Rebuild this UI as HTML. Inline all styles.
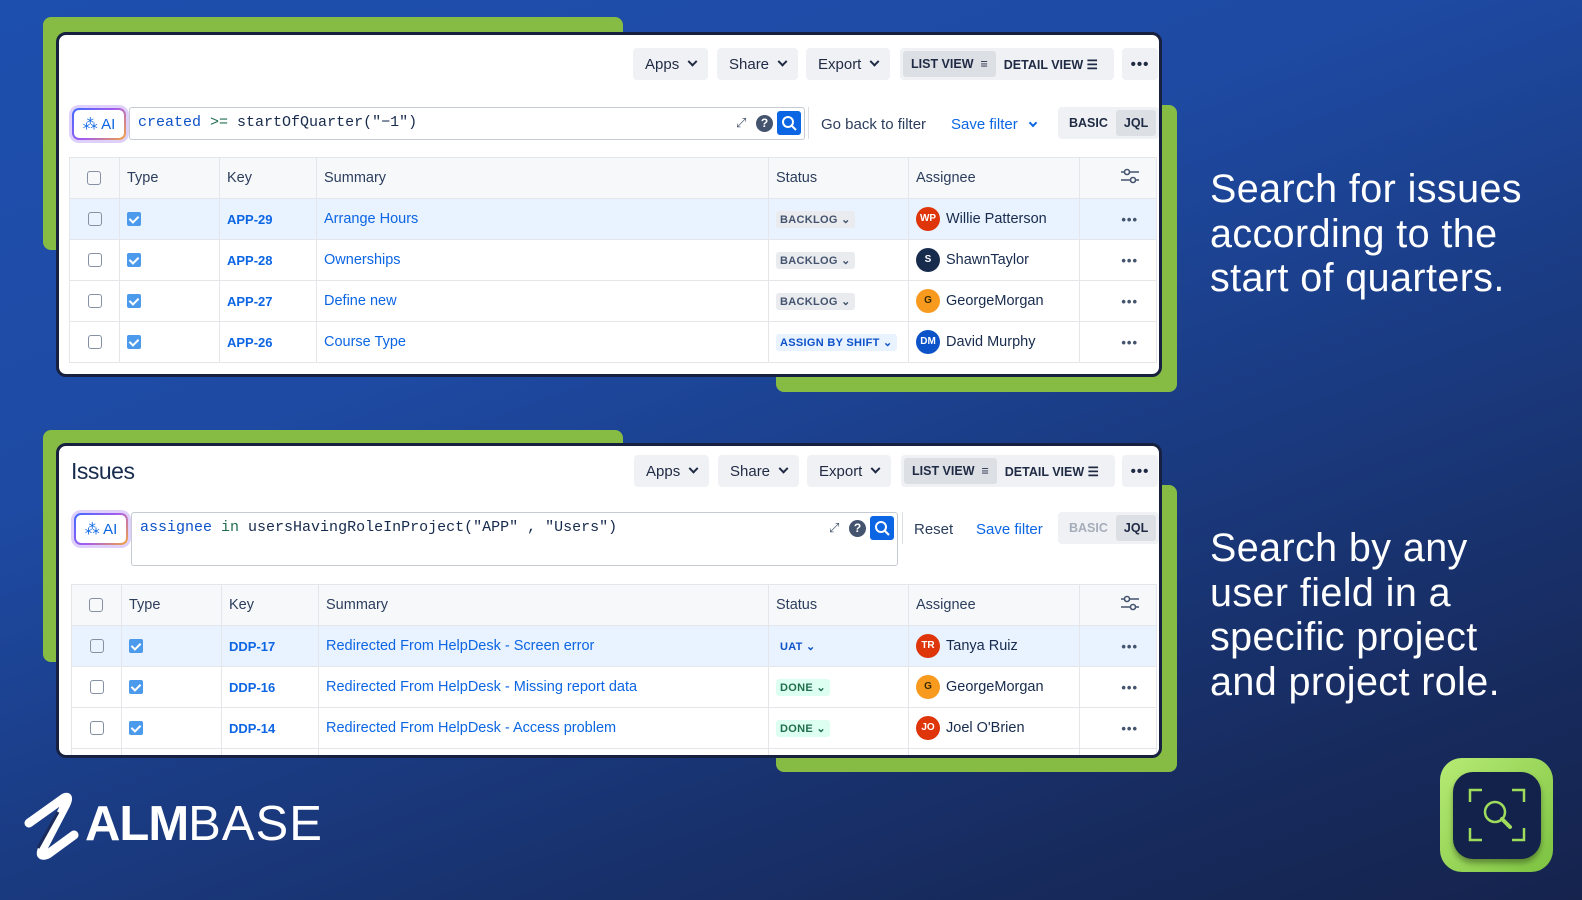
<!DOCTYPE html>
<html><head><meta charset="utf-8"><style>
*{box-sizing:border-box;margin:0;padding:0}
body{width:1582px;height:900px;overflow:hidden;position:relative;font-family:"Liberation Sans",Arial,sans-serif;
background:linear-gradient(160deg,#1d4fae 0%,#1e4aa3 35%,#1a3a80 60%,#172a5c 85%,#15234d 100%);}
i{font-style:normal}
.a{position:absolute}
.green{position:absolute;background:#86bc44;border-radius:8px}
.card{position:absolute;background:#fff;border:3px solid #17213f;border-radius:10px;overflow:hidden}
.btn{position:absolute;background:#f0f1f4;border-radius:4px;height:32px;font-size:15px;color:#1f2a44;display:flex;align-items:center;padding:0 12px;gap:10px}
.chev{width:7px;height:7px;border-right:2px solid #1f2a44;border-bottom:2px solid #1f2a44;transform:rotate(45deg) translate(-2px,-2px)}
.seg{position:absolute;background:#f0f1f4;border-radius:4px;height:32px;display:flex;align-items:center;padding:3px;font-size:12.5px;font-weight:bold;color:#1f2a44}
.seg span{padding:0 8px;height:26px;display:flex;align-items:center;border-radius:3px}
.seg .on{background:#dcdfe4}
.ai{position:absolute;width:54px;height:32px;border-radius:7px;border:2px solid transparent;background:linear-gradient(#fff,#fff) padding-box,linear-gradient(135deg,#3b6cff,#a45cf0 50%,#f5a53a) border-box;box-shadow:0 0 0 3px rgba(160,120,240,.35);color:#0c66e4;font-size:15px;display:flex;align-items:center;justify-content:center}
.inp{position:absolute;border:1px solid #c5cad3;border-radius:3px;background:#fff;font-family:"Liberation Mono",monospace;font-size:15px;color:#172b4d;padding:6px 8px}
.kw{color:#0c52c8}.op{color:#216e4e}
.sbtn{position:absolute;width:24px;height:24px;background:#0c66e4;border-radius:3px}
.help{position:absolute;width:17px;height:17px;border-radius:50%;background:#44546f;color:#fff;font-size:12px;font-weight:bold;text-align:center;line-height:17px}
table{position:absolute;border-collapse:collapse;font-size:14.5px;color:#172b4d}
td,th{border:1px solid #e4e6ea;height:41px;padding:0 7px;text-align:left;font-weight:normal;white-space:nowrap;vertical-align:middle}
th{background:#f7f8f9;color:#2c3e5d}
tr.hl td{background:#e9f2ff}
.cb{display:inline-block;width:14px;height:14px;border:1.5px solid #8590a2;border-radius:3px;vertical-align:middle;margin-left:11px}
.ck{display:inline-block;width:14px;height:14px;background:#4c9aeb;border-radius:2px;vertical-align:middle;position:relative}
.ck:after{content:"";position:absolute;left:4px;top:1.5px;width:4px;height:7px;border-right:2px solid #fff;border-bottom:2px solid #fff;transform:rotate(45deg)}
.key{color:#0c66e4;font-weight:bold;font-size:13px}
.sum{color:#0c66e4}
.lz{display:inline-block;font-size:11px;font-weight:bold;padding:2px 4px;border-radius:3px;background:#e9ebee;color:#44546f;letter-spacing:.3px}
.lz.blue{background:transparent;color:#0c52c8}.lz.green{position:static;background:#dcfff1;color:#216e4e}
.av{display:inline-block;width:24px;height:24px;border-radius:50%;color:#fff;font-size:10px;font-weight:bold;text-align:center;line-height:24px;vertical-align:middle;margin-right:6px}
.dots{text-align:right;color:#44546f;font-size:13px;font-weight:bold;letter-spacing:1px;padding-right:18px}
.side{position:absolute;left:1210px;color:#fff;font-size:39.5px;line-height:44.5px;letter-spacing:.4px}
</style></head><body>

<div class="green" style="left:43px;top:17px;width:580px;height:233px"></div>
<div class="green" style="left:776px;top:105px;width:401px;height:287px"></div>
<div class="card" style="left:56px;top:32px;width:1106px;height:345px">
  <div class="btn" style="left:574px;top:13px">Apps <i class="chev"></i></div>
  <div class="btn" style="left:658px;top:13px">Share <i class="chev"></i></div>
  <div class="btn" style="left:747px;top:13px">Export <i class="chev"></i></div>
  <div class="seg" style="left:841px;top:13px;width:214px"><span class="on">LIST VIEW &nbsp;≡</span><span>DETAIL VIEW ☰</span></div>
  <div class="btn" style="left:1063px;top:13px;width:36px;justify-content:center;font-weight:bold;letter-spacing:1px">•••</div>
  <div class="ai" style="left:13px;top:73px">⁂ AI</div>
  <div class="inp" style="left:70px;top:72px;width:676px;height:33px"><span class="kw">created</span> <span class="op">&gt;=</span> startOfQuarter("−1")</div>
  <div class="a" style="left:677px;top:80px;font-size:13px;color:#44546f">⤢</div>
  <div class="help" style="left:697px;top:80px">?</div>
  <div class="sbtn" style="left:718px;top:76px"><svg width="24" height="24"><circle cx="11" cy="11" r="5" fill="none" stroke="#fff" stroke-width="2"/><path d="M15 15l4 4" stroke="#fff" stroke-width="2"/></svg></div>
  <div class="a" style="left:749px;top:72px;width:1px;height:32px;background:#dcdfe4"></div>
  <div class="a" style="left:762px;top:81px;font-size:15px;color:#2c3e5d">Go back to filter</div>
  <div class="a" style="left:892px;top:81px;font-size:15px;color:#0c66e4">Save filter <span style="display:inline-block;width:6px;height:6px;border-right:2px solid #0c66e4;border-bottom:2px solid #0c66e4;transform:rotate(45deg);margin:0 0 3px 8px"></span></div>
  <div class="seg" style="left:999px;top:72px"><span>BASIC</span><span class="on">JQL</span></div>
  <table style="left:10px;top:122px;width:1088px">
    <tr><th style="width:50px"><i class="cb" style="margin-left:10px"></i></th><th style="width:100px">Type</th><th style="width:97px">Key</th><th style="width:452px">Summary</th><th style="width:140px">Status</th><th style="width:171px">Assignee</th><th style="text-align:right;padding-right:16px"><svg width="20" height="16"><path d="M1 4h18M1 12h18" stroke="#44546f" stroke-width="1.6"/><circle cx="7" cy="4" r="2.5" fill="#fff" stroke="#44546f" stroke-width="1.6"/><circle cx="13" cy="12" r="2.5" fill="#fff" stroke="#44546f" stroke-width="1.6"/></svg></th></tr>
    <tr class="hl"><td><i class="cb"></i></td><td><i class="ck"></i></td><td class="key">APP-29</td><td class="sum">Arrange Hours</td><td><span class="lz">BACKLOG ⌄</span></td><td><i class="av" style="background:#de350b">WP</i>Willie Patterson</td><td class="dots">•••</td></tr>
    <tr><td><i class="cb"></i></td><td><i class="ck"></i></td><td class="key">APP-28</td><td class="sum">Ownerships</td><td><span class="lz">BACKLOG ⌄</span></td><td><i class="av" style="background:#172b4d">S</i>ShawnTaylor</td><td class="dots">•••</td></tr>
    <tr><td><i class="cb"></i></td><td><i class="ck"></i></td><td class="key">APP-27</td><td class="sum">Define new</td><td><span class="lz">BACKLOG ⌄</span></td><td><i class="av" style="background:#f79a1e;color:#3a2a00">G</i>GeorgeMorgan</td><td class="dots">•••</td></tr>
    <tr><td><i class="cb"></i></td><td><i class="ck"></i></td><td class="key">APP-26</td><td class="sum">Course Type</td><td><span class="lz" style="background:#e9f2ff;color:#0c52c8">ASSIGN BY SHIFT ⌄</span></td><td><i class="av" style="background:#0c52c8">DM</i>David Murphy</td><td class="dots">•••</td></tr>
  </table>
</div>

<div class="green" style="left:43px;top:430px;width:580px;height:232px"></div>
<div class="green" style="left:776px;top:485px;width:401px;height:287px"></div>
<div class="card" style="left:56px;top:443px;width:1106px;height:315px">
  <div class="a" style="left:12px;top:12px;font-size:23px;color:#172b4d;letter-spacing:-.5px">Issues</div>
  <div class="btn" style="left:575px;top:9px">Apps <i class="chev"></i></div>
  <div class="btn" style="left:659px;top:9px">Share <i class="chev"></i></div>
  <div class="btn" style="left:748px;top:9px">Export <i class="chev"></i></div>
  <div class="seg" style="left:842px;top:9px;width:214px"><span class="on">LIST VIEW &nbsp;≡</span><span>DETAIL VIEW ☰</span></div>
  <div class="btn" style="left:1063px;top:9px;width:36px;justify-content:center;font-weight:bold;letter-spacing:1px">•••</div>
  <div class="ai" style="left:15px;top:67px">⁂ AI</div>
  <div class="inp" style="left:72px;top:66px;width:767px;height:54px"><span class="kw">assignee</span> <span class="op">in</span> usersHavingRoleInProject("APP" , "Users")</div>
  <div class="a" style="left:770px;top:74px;font-size:13px;color:#44546f">⤢</div>
  <div class="help" style="left:790px;top:74px">?</div>
  <div class="sbtn" style="left:811px;top:70px"><svg width="24" height="24"><circle cx="11" cy="11" r="5" fill="none" stroke="#fff" stroke-width="2"/><path d="M15 15l4 4" stroke="#fff" stroke-width="2"/></svg></div>
  <div class="a" style="left:843px;top:66px;width:1px;height:32px;background:#dcdfe4"></div>
  <div class="a" style="left:855px;top:75px;font-size:15px;color:#2c3e5d">Reset</div>
  <div class="a" style="left:917px;top:75px;font-size:15px;color:#0c66e4">Save filter</div>
  <div class="seg" style="left:999px;top:66px"><span style="color:#a5adba">BASIC</span><span class="on">JQL</span></div>
  <div style="position:absolute;left:12px;top:138px">
  <table style="position:static;width:1086px">
    <tr><th style="width:50px"><i class="cb" style="margin-left:10px"></i></th><th style="width:100px">Type</th><th style="width:97px">Key</th><th style="width:450px">Summary</th><th style="width:140px">Status</th><th style="width:171px">Assignee</th><th style="text-align:right;padding-right:16px"><svg width="20" height="16"><path d="M1 4h18M1 12h18" stroke="#44546f" stroke-width="1.6"/><circle cx="7" cy="4" r="2.5" fill="#fff" stroke="#44546f" stroke-width="1.6"/><circle cx="13" cy="12" r="2.5" fill="#fff" stroke="#44546f" stroke-width="1.6"/></svg></th></tr>
    <tr class="hl"><td><i class="cb"></i></td><td><i class="ck"></i></td><td class="key">DDP-17</td><td class="sum">Redirected From HelpDesk - Screen error</td><td><span class="lz blue">UAT ⌄</span></td><td><i class="av" style="background:#de350b">TR</i>Tanya Ruiz</td><td class="dots">•••</td></tr>
    <tr><td><i class="cb"></i></td><td><i class="ck"></i></td><td class="key">DDP-16</td><td class="sum">Redirected From HelpDesk - Missing report data</td><td><span class="lz green">DONE ⌄</span></td><td><i class="av" style="background:#f79a1e;color:#3a2a00">G</i>GeorgeMorgan</td><td class="dots">•••</td></tr>
    <tr><td><i class="cb"></i></td><td><i class="ck"></i></td><td class="key">DDP-14</td><td class="sum">Redirected From HelpDesk - Access problem</td><td><span class="lz green">DONE ⌄</span></td><td><i class="av" style="background:#de350b">JO</i>Joel O'Brien</td><td class="dots">•••</td></tr>
    <tr><td></td><td></td><td></td><td></td><td></td><td></td><td></td></tr>
  </table></div>
</div>

<div class="side" style="top:167px">Search for issues<br>according to the<br>start of quarters.</div>
<div class="side" style="top:526px">Search by any<br>user field in a<br>specific project<br>and project role.</div>

<svg class="a" style="left:24px;top:790px" width="70" height="75"><path d="M5 33 L40 8 Q46 5 42 14 L18 60 Q15 68 24 64 L50 45" fill="none" stroke="#fff" stroke-width="9" stroke-linecap="round" stroke-linejoin="round"/><path d="M14 58 L34 22" stroke="#1a2a5a" stroke-width="3"/></svg>
<div class="a" style="left:85px;top:796px;font-size:49px;color:#fff;letter-spacing:-1px"><b>ALM</b><span style="font-weight:normal;letter-spacing:1px">BASE</span></div>

<div class="a" style="left:1440px;top:758px;width:113px;height:114px;border-radius:22px;background:linear-gradient(135deg,#b7eb74,#7cc241)"></div>
<div class="a" style="left:1453px;top:772px;width:88px;height:87px;border-radius:20px;background:#13224a;box-shadow:0 4px 6px rgba(0,0,0,.35)"></div>
<svg class="a" style="left:1453px;top:772px" width="88" height="87"><g fill="none" stroke="#9fdc5c" stroke-width="2.5"><path d="M17 30V18H29M59 18H71V30M71 56V68H59M29 68H17V56"/><circle cx="42" cy="40" r="10"/><path d="M49 47L57 55" stroke-width="4" stroke-linecap="round"/></g></svg>
</body></html>
